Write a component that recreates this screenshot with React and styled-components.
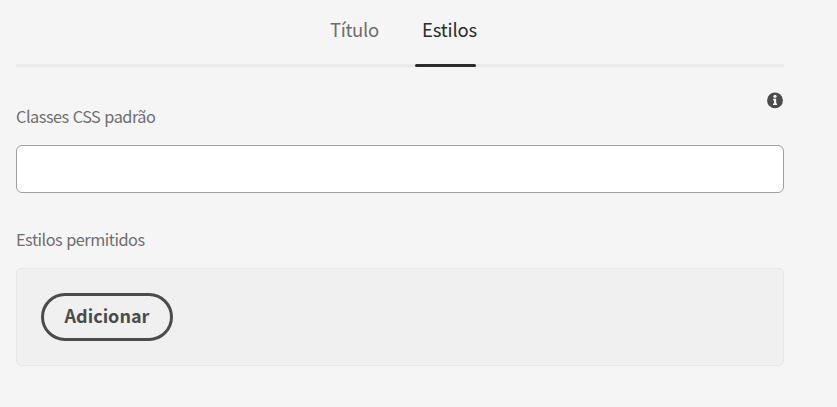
import React from "react";
import styled, { createGlobalStyle } from "styled-components";

const fontStack = `"Noto Sans CJK SC", "Noto Sans", sans-serif`;

const GlobalStyle = createGlobalStyle`
  *, *::before, *::after { box-sizing: border-box; }
  body { margin: 0; background: #f5f5f5; font-family: ${fontStack}; }
`;

const Panel = styled.main`
  width: 784px;
  height: 407px;
  padding-left: 16px;
`;

const Tabs = styled.nav`
  display: flex;
  gap: 37px;
  height: 67px;
  padding-left: 314px;
  border-bottom: 3px solid #eaeaea;
`;

const Tab = styled.button`
  display: flex;
  flex-direction: column;
  flex: none;
  width: ${(p) => p.$width}px;
  height: 67px;
  padding: 0;
  border: 0;
  background: none;
  color: ${(p) => (p.$active ? "#2c2c2c" : "#6e6e6e")};
  font: 400 18.5px/58px ${fontStack};
`;

const TabText = styled.span`
  height: 64px;
  padding-left: ${(p) => p.$inset}px;
  white-space: nowrap;
  letter-spacing: ${(p) => p.$spacing}px;
`;

const Indicator = styled.span`
  width: 100%;
  height: 3px;
  border-radius: 1.5px;
  background: #2c2c2c;
`;

const Field = styled.section`
  display: flex;
  flex-direction: column;
`;

const InfoRow = styled.div`
  display: flex;
  justify-content: flex-end;
  height: 16px;
  margin-top: 25px;
  padding-right: 1px;
`;

const Label = styled.label`
  height: 24px;
  margin-top: ${(p) => p.$top}px;
  color: #6e6e6e;
  font-size: 16.3px;
  line-height: 23px;
  letter-spacing: -0.48px;
  word-spacing: 0.8px;
`;

const Input = styled.input`
  height: 48px;
  margin-top: 16px;
  border: 1px solid #a0a0a0;
  border-radius: 6px;
  background: #fff;
`;

const Well = styled.div`
  height: 98px;
  margin-top: 16px;
  padding: 24px;
  border: 1px solid #e6e6e6;
  border-radius: 5px;
  background: #f0f0f0;
`;

const AddButton = styled.button`
  width: 132px;
  height: 48px;
  padding: 0 0 4px;
  border: 3px solid #4b4b4b;
  border-radius: 24px;
  background: transparent;
  color: #4b4b4b;
  font: 700 18px/38px ${fontStack};
`;

const InfoIcon = () => (
  <svg width="16" height="17" viewBox="0 0 16 17" aria-hidden="true">
    <circle cx="8" cy="8.4" r="7.9" fill="#4b4b4b" />
    <circle cx="8" cy="4.3" r="1.6" fill="#f5f5f5" />
    <path d="M6 6.8h3.2v4.7H10V13H6v-1.5h1V8.3H6z" fill="#f5f5f5" />
  </svg>
);

export default function App() {
  return (
    <>
      <GlobalStyle />
      <Panel>
        <Tabs>
          <Tab $width={48}><TabText $inset={0} $spacing={-0.35}>Título</TabText></Tab>
          <Tab $width={61} $active>
            <TabText $inset={7} $spacing={-0.2}>Estilos</TabText>
            <Indicator />
          </Tab>
        </Tabs>
        <Field>
          <InfoRow><InfoIcon /></InfoRow>
          <Label $top={-3} htmlFor="classes">Classes CSS padrão</Label>
          <Input id="classes" />
          <Label as="div" $top={35}>Estilos permitidos</Label>
          <Well><AddButton>Adicionar</AddButton></Well>
        </Field>
      </Panel>
    </>
  );
}
